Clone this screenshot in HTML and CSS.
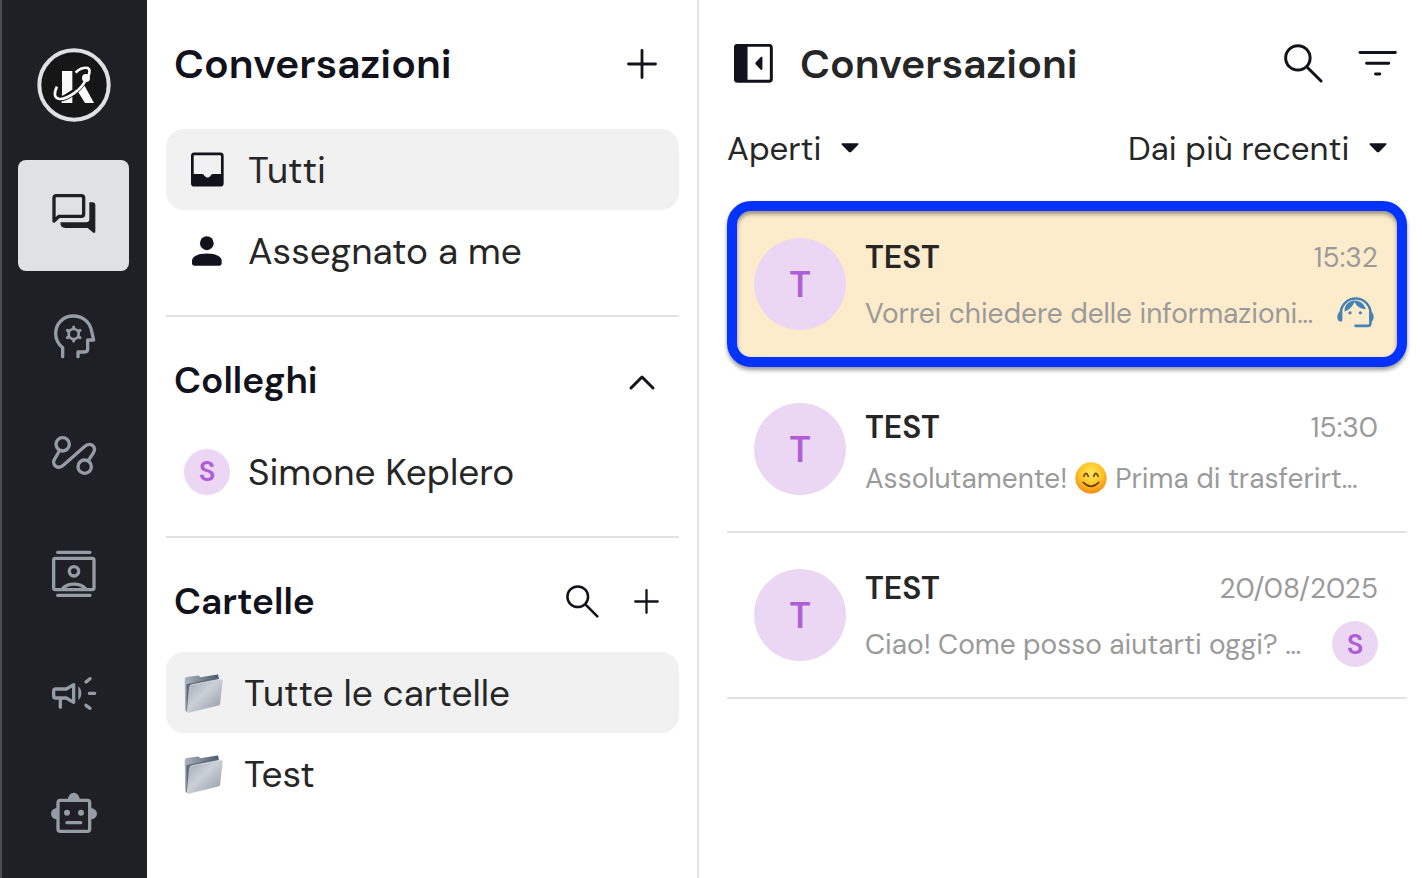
FILE: index.html
```html
<!DOCTYPE html>
<html lang="it">
<head>
<meta charset="utf-8">
<meta name="viewport" content="width=device-width, initial-scale=1">
<title>Conversazioni</title>
<link rel="stylesheet" href="styles.css">
</head>
<body>
<svg class="defs" aria-hidden="true">
  <defs>
    <linearGradient id="folder-front" x1="0" y1="0" x2="1" y2="1">
      <stop offset="0" stop-color="#9da5b0"/><stop offset=".45" stop-color="#ccd1d8"/><stop offset="1" stop-color="#8f98a3"/>
    </linearGradient>
    <linearGradient id="folder-back" x1="0" y1="0" x2="1" y2="0">
      <stop offset="0" stop-color="#aab4bf"/><stop offset="1" stop-color="#4d5a6b"/>
    </linearGradient>
    <radialGradient id="smile-face" cx=".5" cy=".35" r=".65">
      <stop offset="0" stop-color="#ffe857"/><stop offset=".55" stop-color="#ffc52b"/><stop offset="1" stop-color="#f58a13"/>
    </radialGradient>
    <symbol id="folder" viewBox="74 310 110 113">
      <path d="M76 326l4-5 35-4 5 5 48-8q3 0 3 4v16L88 418q-11 4-11-5z" fill="url(#folder-back)"/>
      <path d="M81 342v76h6l6-74 80-18v-4z" fill="#5d6876"/>
      <path d="M94 344l84-17q5-1 5 4l-7 66q-1 4-5 5l-84 20q-5 1-5-4l6-68q1-5 6-6z" fill="url(#folder-front)"/>
      <path d="M91 347q1-3 5-4l82-16 5 3" fill="none" stroke="#e5e8ec" stroke-width="2"/>
    </symbol>
    <symbol id="search" viewBox="0 0 118 118">
      <g fill="none" stroke="currentColor" stroke-width="9" stroke-linecap="round"><circle cx="42" cy="42" r="37"/><path d="M71 71l41 41"/></g>
    </symbol>
    <symbol id="plus" viewBox="0 0 30 30">
      <path d="M15 1.5v27M1.5 15h27" fill="none" stroke="currentColor" stroke-width="2.8" stroke-linecap="round"/>
    </symbol>
    <symbol id="caret" viewBox="0 0 54 30">
      <path d="M4 1h46q5 0 1 5L31 26q-4 4-8 0L3 6Q-1 1 4 1z" fill="currentColor"/>
    </symbol>
  </defs>
</svg>
<div class="app">
  <nav class="rail" aria-label="Principale">
    <a class="logo" href="#" aria-label="Home">
      <svg viewBox="109 84 222 222">
        <circle cx="220" cy="195" r="104" fill="#161616" stroke="#dfe0e4" stroke-width="12"/>
        <path d="M184 153h31v56l-31 20zM183 242l32-16v23h-32zM232 215l19-19 29 53h-27z" fill="#fafafa"/>
        <path d="M168 202c-9 16-8 33 8 34 22 2 66-28 80-61" fill="none" stroke="#161616" stroke-width="15"/>
        <path d="M169 200c-10 19-9 36 8 37 24 1 68-29 80-62" fill="none" stroke="#fafafa" stroke-width="8"/>
        <path d="M225 158c9-11 26-17 36-14 8 3 6 15 2 24" fill="none" stroke="#fafafa" stroke-width="8"/>
        <circle cx="256" cy="174" r="12" fill="#fafafa"/>
      </svg>
    </a>
    <button class="rail-item active" aria-label="Conversazioni">
      <svg viewBox="149 514 144 144"><path d="M161 601v-69q0-7 7-7h75q7 0 7 7v48q0 7-7 7h-67z" fill="none" stroke="currentColor" stroke-width="10" stroke-linejoin="round"/><path d="M267 545h9q9 0 9 9v77q0 9-8 4l-15-13h-67q-15 0-15-17h77q10 0 10-10z" fill="currentColor"/></svg>
    </button>
    <button class="rail-item" aria-label="Intelligenza artificiale">
      <svg viewBox="150 61 144 144"><g fill="none" stroke="currentColor" stroke-width="10" stroke-linecap="round" stroke-linejoin="round"><path d="M188 198v-27c-13-11-21-25-21-42 0-31 23-53 53-53s50 19 55 46l6 26h-18v27q0 9-9 9h-20v14"/><circle cx="221" cy="130" r="15" stroke-width="8"/><path stroke-width="9" d="M221 111v-2M221 151v-2M204 120l-2-1M238 120l2-1M204 140l-2 1M238 140l2 1"/></g></svg>
    </button>
    <button class="rail-item" aria-label="Flussi">
      <svg viewBox="150 420 144 144"><g fill="none" stroke="currentColor" stroke-width="10"><circle cx="188" cy="463" r="20"/><circle cx="254" cy="530" r="20"/><path d="M178 483l-14 24c-11 17 10 33 26 19l62-55c19-17 39-2 28 18l-15 23"/></g></svg>
    </button>
    <button class="rail-item" aria-label="Contatti">
      <svg viewBox="149 775 144 144"><g fill="none" stroke="currentColor" stroke-width="10" stroke-linecap="round"><path d="M172 785h97M172 914h97"/><rect x="160" y="803" width="121" height="94" rx="5"/><circle cx="221" cy="842" r="14"/><path d="M187 894c15-18 53-18 68 0"/></g></svg>
    </button>
    <button class="rail-item" aria-label="Campagne">
      <svg viewBox="149 84 144 144"><g fill="none" stroke="currentColor" stroke-width="10" stroke-linecap="round" stroke-linejoin="round"><path d="M160 153q0-6 6-6h32l22-13v53l-22-13h-32q-6 0-6-6zM180 177v25M257 126l12-10M267 160h16M257 196l12 9"/></g><path d="M234 139q9 8 9 21t-9 21z" fill="currentColor"/></svg>
    </button>
    <button class="rail-item" aria-label="Bot">
      <svg viewBox="149 441 144 144"><g fill="currentColor"><path d="M203 478a17 19 0 0 1 35 0zM170 504a18 17 0 0 0 0 34zM271 504a19 17 0 0 1 0 34z"/><circle cx="200" cy="518" r="9"/><circle cx="242" cy="518" r="9"/></g><g fill="none" stroke="currentColor" stroke-width="10" stroke-linecap="round"><rect x="173" y="481" width="95" height="93" rx="7"/><path d="M200 548h41"/></g></svg>
    </button>
  </nav>

  <aside class="panel">
    <header class="panel-head">
      <h1 class="title">Conversazioni</h1>
      <button class="icon-button" aria-label="Nuova conversazione"><svg class="plus-large"><use href="#plus"/></svg></button>
    </header>
    <button class="row selected">
      <span class="slot"><svg class="inbox" viewBox="88 365 98 103"><rect x="92" y="370" width="89" height="93" rx="6" fill="none" stroke="currentColor" stroke-width="8"/><path d="M92 430h28q6 0 8 5 9 11 18 0 2-5 8-5h28v30q0 4-4 4H96q-4 0-4-4z" fill="currentColor"/></svg></span>
      <span>Tutti</span>
    </button>
    <button class="row">
      <span class="slot"><svg class="person" viewBox="94 620 87 87"><g fill="currentColor"><circle cx="137" cy="641" r="20"/><path d="M94 692c0-28 86-28 86 0v8q0 6-6 6h-74q-6 0-6-6z"/></g></svg></span>
      <span>Assegnato a me</span>
    </button>
    <hr class="divider">
    <header class="section-head">
      <h2 class="subtitle">Colleghi</h2>
      <button class="icon-button" aria-label="Comprimi colleghi"><svg class="chevron" viewBox="-2 -4 34 34"><path d="M4 21L15 10l11 11" fill="none" stroke="currentColor" stroke-width="3" stroke-linecap="round" stroke-linejoin="round"/></svg></button>
    </header>
    <button class="row">
      <span class="badge">S</span>
      <span>Simone Keplero</span>
    </button>
    <hr class="divider">
    <header class="section-head">
      <h2 class="subtitle">Cartelle</h2>
      <span class="tools">
        <button class="icon-button" aria-label="Cerca cartelle"><svg class="search-small"><use href="#search"/></svg></button>
        <button class="icon-button" aria-label="Nuova cartella"><svg class="plus-small"><use href="#plus"/></svg></button>
      </span>
    </header>
    <button class="row selected">
      <span class="folder-slot"><svg class="folder"><use href="#folder"/></svg></span>
      <span>Tutte le cartelle</span>
    </button>
    <button class="row">
      <span class="folder-slot"><svg class="folder"><use href="#folder"/></svg></span>
      <span>Test</span>
    </button>
  </aside>

  <main class="inbox-list">
    <header class="list-head">
      <button class="icon-button" aria-label="Chiudi pannello"><svg class="icon-large" viewBox="57 42 118 118"><rect x="61" y="46" width="109" height="109" rx="7" fill="none" stroke="currentColor" stroke-width="9"/><path d="M62 46h36v109H62zM123 97l15-16q5-2 5 3v33q0 5-5 3l-15-16q-3-4 0-7z" fill="currentColor"/></svg></button>
      <h2 class="title soft">Conversazioni</h2>
      <button class="icon-button push" aria-label="Cerca"><svg class="icon-large"><use href="#search"/></svg></button>
      <button class="icon-button" aria-label="Filtra"><svg class="icon-large" viewBox="743 42 118 118"><path d="M749 68h107M769 100h67M796 133h13" fill="none" stroke="currentColor" stroke-width="9" stroke-linecap="round"/></svg></button>
    </header>
    <div class="filters">
      <div class="filter">
        <select class="select" aria-label="Stato"><option>Aperti</option></select>
        <svg class="caret"><use href="#caret"/></svg>
      </div>
      <div class="filter">
        <select class="select" aria-label="Ordinamento"><option>Dai più recenti</option></select>
        <svg class="caret"><use href="#caret"/></svg>
      </div>
    </div>
    <a class="conversation highlighted" href="#">
      <span class="avatar">T</span>
      <span class="details">
        <span class="line top"><strong class="name">TEST</strong><time class="muted">15:32</time></span>
        <span class="line bottom tall"><span class="muted">Vorrei chiedere delle informazioni…</span>
          <span class="agent"><svg class="headset" viewBox="817 313 114 114"><g fill="none" stroke="#4682b4" stroke-width="8" stroke-linecap="round"><path d="M829 389v-26a46 46 0 0 1 91 0v37q0 8-8 8h-38"/></g><g fill="#4682b4"><path d="M833 362v32q-15 3-15-14 0-10 6-15zM916 362v36q14-2 14-18 0-10-6-15z"/><path d="M840 364c0-20 12-33 32-34-3 14-15 28-32 34zM869 330c18 0 32 10 37 27-18 0-31-11-37-27z"/><circle cx="857" cy="368" r="5"/><circle cx="889" cy="368" r="5"/></g></svg></span>
        </span>
      </span>
    </a>
    <a class="conversation" href="#">
      <span class="avatar">T</span>
      <span class="details">
        <span class="line top"><strong class="name">TEST</strong><time class="muted">15:30</time></span>
        <span class="line bottom"><span class="muted with-emoji">Assolutamente! <svg class="smile" viewBox="0 0 94 94" role="img" aria-label="Sorriso"><circle cx="47" cy="47" r="46" fill="url(#smile-face)"/><g fill="none" stroke="#70400f" stroke-width="5" stroke-linecap="round"><path d="M26 42q6-17 13 0M55 42q6-17 13 0M24 60q23 23 46 0"/></g></svg> Prima di trasferirt…</span></span>
      </span>
    </a>
    <a class="conversation" href="#">
      <span class="avatar">T</span>
      <span class="details">
        <span class="line top"><strong class="name">TEST</strong><time class="muted">20/08/2025</time></span>
        <span class="line bottom tall"><span class="muted">Ciao! Come posso aiutarti oggi? …</span><span class="badge">S</span></span>
      </span>
    </a>
  </main>
</div>
</body>
</html>
```
FILE: styles.css
```css
* { box-sizing: border-box; }

body {
  margin: 0;
  background: #fff;
  color: #262626;
  font-family: "DM Sans", Inter, "Liberation Sans", sans-serif;
}

h1, h2 { margin: 0; }

svg { display: block; flex: none; }

button, select { font: inherit; color: inherit; }

a { color: inherit; text-decoration: none; }

.defs { position: absolute; width: 0; height: 0; }

.app { display: flex; min-height: 100vh; }

/* Icon rail */
.rail {
  flex: none;
  display: flex;
  flex-direction: column;
  align-items: center;
  gap: 8px;
  width: 147px;
  padding-top: 48px;
  background: #1f2025;
  box-shadow: inset 2px 0 #4c4d51;
  color: #949ca5;
}

.logo { margin-bottom: 30px; }
.logo svg { width: 74px; height: 74px; }

.rail-item {
  display: grid;
  place-items: center;
  width: 111px;
  height: 111px;
  padding: 0;
  border: 0;
  border-radius: 8px;
  background: none;
}

.rail-item svg { width: 48px; height: 48px; }
.rail-item.active { background: #dfe1e5; color: #1f2025; }

/* Folder panel */
.panel {
  flex: none;
  width: 552px;
  padding: 0 18px 0 19px;
  border-right: 2px solid #e2e2e2;
}

.panel-head,
.section-head {
  display: flex;
  align-items: center;
  justify-content: space-between;
  padding-left: 8px;
  color: #12121c;
}

.panel-head { height: 129px; padding-right: 22px; padding-bottom: 2px; }
.section-head { height: 114px; padding-right: 20px; padding-top: 12px; }

.title { font-size: 41px; font-weight: 600; }
.title.soft { color: #262626; }
.subtitle { font-size: 37px; font-weight: 600; }

.icon-button {
  padding: 0;
  border: 0;
  background: none;
  color: #12121c;
}

.tools { display: flex; align-items: center; gap: 35px; }
.plus-large { width: 30px; height: 30px; }
.chevron { width: 34px; height: 34px; }
.plus-small { width: 25px; height: 25px; }
.search-small { width: 33px; height: 33px; }

.row {
  display: flex;
  align-items: center;
  gap: 18px;
  width: 100%;
  height: 81px;
  padding: 0 18px;
  border: 0;
  border-radius: 18px;
  background: none;
  font-size: 37px;
  text-align: left;
  white-space: nowrap;
}

.row.selected { background: #f1f1f1; }

.slot { display: grid; place-items: center; width: 46px; color: #12121c; }
.folder-slot { width: 42px; }
.inbox { width: 33px; height: 35px; }
.person { width: 30px; height: 30px; }
.folder { width: 39px; height: 40px; }

.divider { height: 2px; margin: 24px 0 0; border: 0; background: #e2e2e2; }

.badge {
  flex: none;
  display: grid;
  place-items: center;
  width: 46px;
  height: 46px;
  border-radius: 50%;
  background: #ebd7f3;
  color: #ae5fd6;
  font-size: 28px;
  font-weight: 600;
}

/* Conversation list */
.inbox-list { flex: 1; min-width: 0; padding: 0 15px 0 28px; }

.list-head {
  display: flex;
  align-items: center;
  height: 128px;
  gap: 27px;
  padding: 0 10px 1px 7px;
}

.icon-large { width: 39px; height: 39px; }
.push { margin-left: auto; margin-right: 8px; }

.filters {
  display: flex;
  justify-content: space-between;
  height: 40px;
  margin-bottom: 33px;
  padding-right: 20px;
}

.filter { display: flex; align-items: center; gap: 19px; }

.select {
  appearance: none;
  padding: 0;
  border: 0;
  background: none;
  font-size: 33px;
}

.caret { width: 18px; height: 10px; color: #12121c; }

.conversation {
  display: flex;
  align-items: center;
  gap: 19px;
  height: 166px;
  padding: 0 29px 0 27px;
  border-bottom: 2px solid #e2e2e2;
}

.conversation.highlighted {
  padding: 0 19px 0 17px;
  border: 10px solid #0433ff;
  border-radius: 24px;
  background: #fdeccb;
  box-shadow: 0 3px 4px rgba(0, 0, 0, .4), inset 0 3px 4px rgba(0, 0, 0, .4);
}

.avatar {
  flex: none;
  display: grid;
  place-items: center;
  width: 92px;
  height: 92px;
  border-radius: 50%;
  background: #ebd7f3;
  color: #ae5fd6;
  font-size: 37px;
  font-weight: 600;
}

.details { flex: 1; min-width: 0; }

.line {
  display: flex;
  align-items: center;
  justify-content: space-between;
  white-space: nowrap;
}

.top { height: 58px; }
.bottom { height: 44px; }
.tall { height: 54px; }

.name { font-size: 32px; font-weight: 600; }
.muted { color: #9a9a9a; font-size: 28px; }
.with-emoji { display: flex; align-items: center; gap: 8px; }

.agent { display: grid; place-items: center; width: 46px; }
.headset { width: 37px; height: 37px; }
.smile { width: 32px; height: 32px; }
```
